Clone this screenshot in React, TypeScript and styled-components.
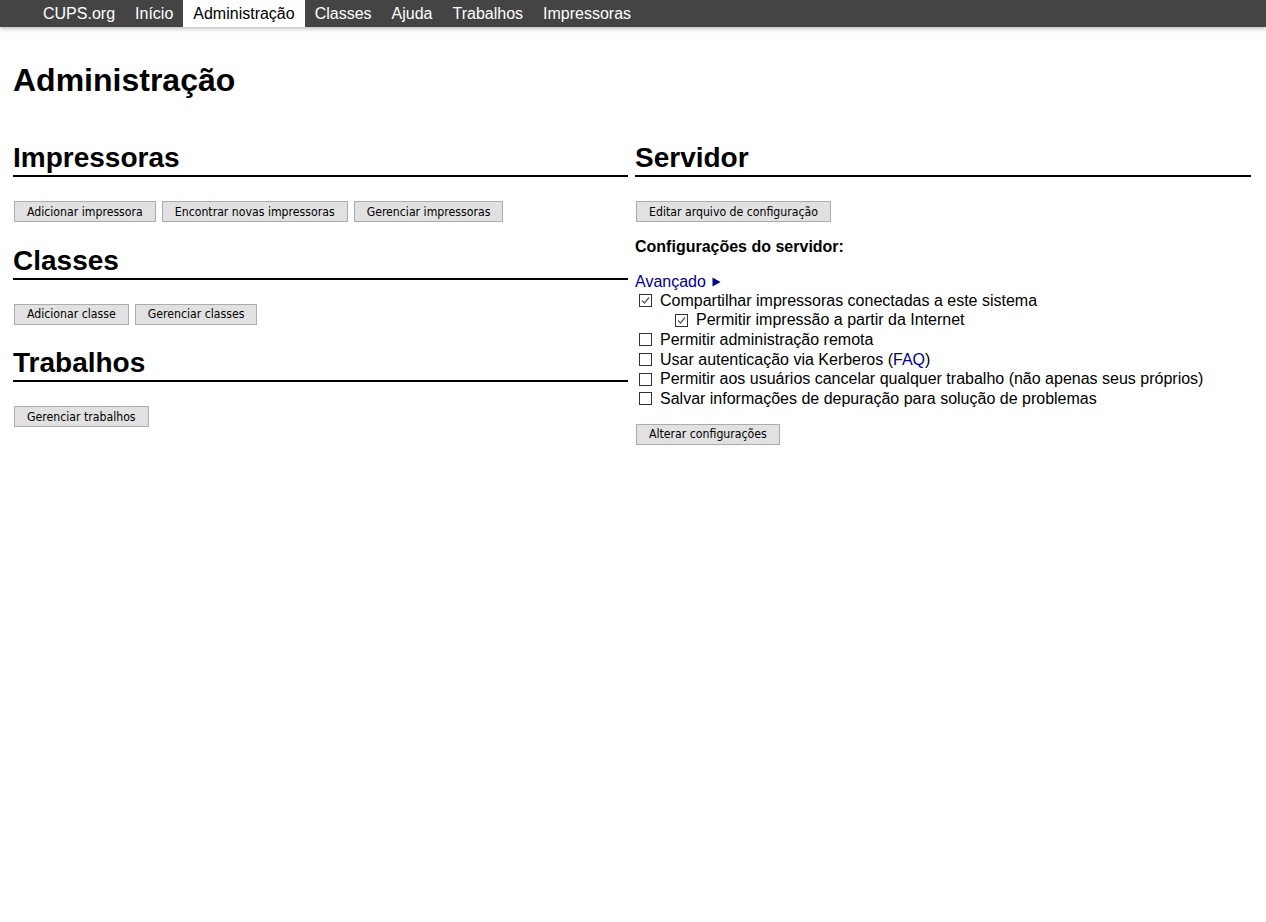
import React from "react"
import styled, { createGlobalStyle } from "styled-components"

const GlobalStyle = createGlobalStyle`
  html, body {
    margin: 0;
    padding: 0;
    background: #fff;
    color: #000;
    font-family: "Liberation Sans", Arial, sans-serif;
    font-size: 16px;
  }
`

const tabs = ["CUPS.org", "Início", "Administração", "Classes", "Ajuda", "Trabalhos", "Impressoras"]

const options = [
  { label: "Compartilhar impressoras conectadas a este sistema", checked: true },
  { label: "Permitir impressão a partir da Internet", checked: true, indent: true },
  { label: "Permitir administração remota" },
  { label: "Usar autenticação via Kerberos", faq: true },
  { label: "Permitir aos usuários cancelar qualquer trabalho (não apenas seus próprios)" },
  { label: "Salvar informações de depuração para solução de problemas" }
]

export default function App() {
  return (
    <>
      <GlobalStyle />
      <Header>
        {tabs.map(t => (
          <Tab key={t} $active={t === "Administração"}>
            {t}
          </Tab>
        ))}
      </Header>
      <Main>
        <Title>Administração</Title>
        <Columns>
          <Column>
            <SectionTitle>Impressoras</SectionTitle>
            <Buttons>
              <Button>Adicionar impressora</Button>
              <Button>Encontrar novas impressoras</Button>
              <Button>Gerenciar impressoras</Button>
            </Buttons>
            <SectionTitle>Classes</SectionTitle>
            <Buttons>
              <Button>Adicionar classe</Button>
              <Button>Gerenciar classes</Button>
            </Buttons>
            <SectionTitle>Trabalhos</SectionTitle>
            <Buttons>
              <Button>Gerenciar trabalhos</Button>
            </Buttons>
          </Column>
          <Column>
            <SectionTitle>Servidor</SectionTitle>
            <Buttons $bottom={15}>
              <Button>Editar arquivo de configuração</Button>
            </Buttons>
            <SettingsTitle>Configurações do servidor:</SettingsTitle>
            <Advanced href="#">
              Avançado
              <svg width="9" height="10" viewBox="0 0 9 10">
                <path d="M0.5 0.5 L8.5 5 L0.5 9.5 Z" fill="#00008b" />
              </svg>
            </Advanced>
            <Options>
              {options.map(o => (
                <Option key={o.label} $indent={o.indent}>
                  <Box>
                    {o.checked && (
                      <svg width="11" height="11" viewBox="0 0 11 11">
                        <path d="M2 5.5 L4.5 8 L9 2.5" fill="none" stroke="#555" strokeWidth="1.2" />
                      </svg>
                    )}
                  </Box>
                  {o.label}
                  {o.faq && (
                    <>
                      {" ("}
                      <Link href="#">FAQ</Link>)
                    </>
                  )}
                </Option>
              ))}
            </Options>
            <Buttons $top={15}>
              <Button>Alterar configurações</Button>
            </Buttons>
          </Column>
        </Columns>
      </Main>
    </>
  )
}

// Styled
const Header = styled.div`
  display: flex;
  height: 27px;
  padding-left: 33px;
  background: #444;
  box-shadow: 0 2px 4px rgba(0, 0, 0, 0.25);
`

const Tab = styled.a<{ $active?: boolean }>`
  display: flex;
  align-items: center;
  padding: 0 10px;
  font-size: 16px;
  color: ${p => (p.$active ? "#000" : "#fff")};
  background: ${p => (p.$active ? "#fff" : "transparent")};
`

const Main = styled.div`
  padding: 0 15px 0 13px;
`

const Title = styled.h1`
  margin: 35px 0 43px;
  font-size: 32px;
  line-height: 37px;
  font-weight: bold;
`

const Columns = styled.div`
  display: grid;
  grid-template-columns: 615px 1fr;
  column-gap: 7px;
`

const Column = styled.div`
  display: flex;
  flex-direction: column;
  align-items: stretch;
`

const SectionTitle = styled.h2`
  margin: 0;
  padding-bottom: 1px;
  font-size: 28px;
  line-height: 32px;
  font-weight: bold;
  border-bottom: 2px solid #000;
`

const Buttons = styled.div<{ $top?: number; $bottom?: number }>`
  display: flex;
  gap: 6px;
  margin: ${p => p.$top ?? 24}px 0 ${p => p.$bottom ?? 22.5}px 1px;
`

const Button = styled.button`
  box-sizing: border-box;
  height: 21px;
  padding: 0 12px;
  font-family: "DejaVu Sans Condensed", "Liberation Sans", sans-serif;
  font-size: 12.2px;
  color: #000;
  background: #e1e1e1;
  border: 1px solid #adadad;
  border-radius: 0;
`

const SettingsTitle = styled.div`
  margin: 0 0 16px;
  font-size: 16px;
  font-weight: bold;
  line-height: 20px;
`

const Advanced = styled.a`
  display: flex;
  align-items: center;
  gap: 6px;
  height: 18px;
  color: #00008b;
  text-decoration: none;
`

const Options = styled.div`
  display: flex;
  flex-direction: column;
`

const Option = styled.label<{ $indent?: boolean }>`
  display: flex;
  align-items: center;
  height: 19.6px;
  padding-left: ${p => (p.$indent ? "36px" : "0")};
  white-space: pre;
`

const Box = styled.span`
  box-sizing: border-box;
  display: flex;
  align-items: center;
  justify-content: center;
  width: 13px;
  height: 13px;
  margin: 0 8px 0 4px;
  border: 1px solid #333;
  background: #fff;
`

const Link = styled.a`
  color: #00008b;
  text-decoration: none;
`
